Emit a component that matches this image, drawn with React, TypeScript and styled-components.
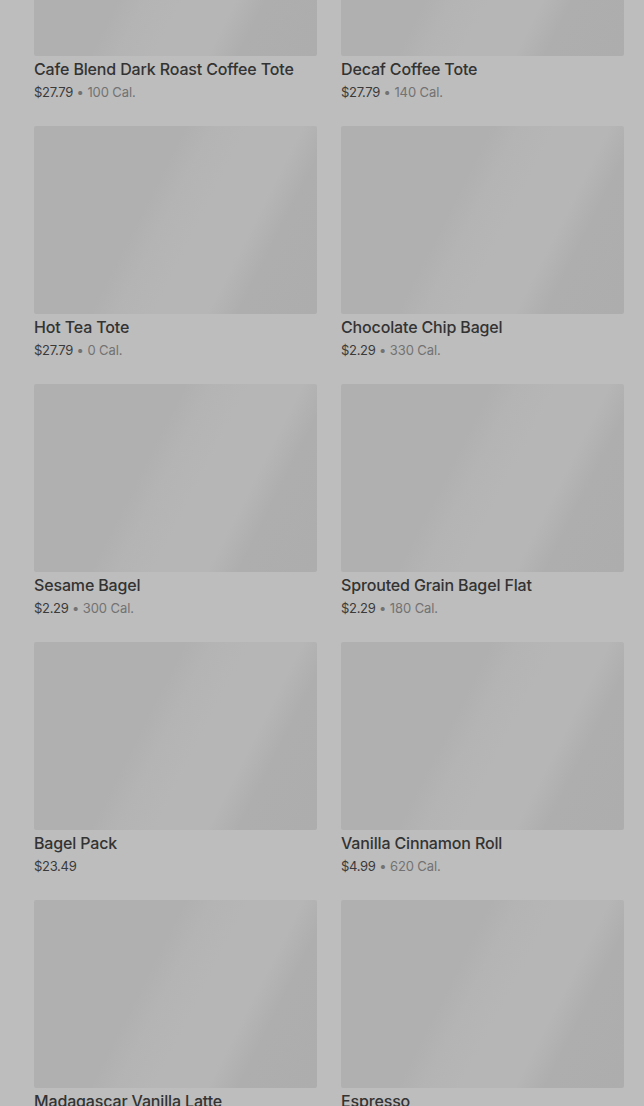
import React, { FC } from 'react';
import styled, { createGlobalStyle } from 'styled-components';

const GlobalStyle = createGlobalStyle`
  html, body {
    margin: 0;
    padding: 0;
    background: #bdbdbd;
    overflow: hidden;
  }
  body {
    font-family: Inter, "Noto Sans", sans-serif;
  }
`;

const Page = styled.div`
  height: 1106px;
  overflow: hidden;
  background: #bdbdbd;
`;

const Grid = styled.ul`
  list-style: none;
  margin: -132px 0 0;
  padding: 0 20px 0 34px;
  display: grid;
  grid-template-columns: 1fr 1fr;
  column-gap: 24px;
  row-gap: 24px;
`;

const Card = styled.li`
  display: flex;
  flex-direction: column;
  min-width: 0;
`;

const Thumb = styled.div`
  height: 188px;
  border-radius: 2px;
  background: linear-gradient(
    117deg,
    #b0b0b0 0%,
    #b0b0b0 40%,
    #b4b4b4 47%,
    #b6b6b6 57%,
    #b6b6b6 71%,
    #aeaeae 79%,
    #adadad 100%
  );
`;

const Title = styled.h3`
  margin: 2px 0 0;
  font-size: 16px;
  line-height: 22px;
  font-weight: 500;
  letter-spacing: -0.15px;
  color: #333333;
  white-space: nowrap;
`;

const Meta = styled.div`
  margin-top: 2px;
  font-size: 13px;
  line-height: 20px;
  color: #3a3a3a;
  letter-spacing: -0.3px;
`;

const Cal = styled.span`
  color: #727272;
  letter-spacing: -0.1px;
`;

type Item = { name: string; price: string; cal?: string };

const ITEMS: Item[] = [
  { name: 'Cafe Blend Dark Roast Coffee Tote', price: '$27.79', cal: '100 Cal.' },
  { name: 'Decaf Coffee Tote', price: '$27.79', cal: '140 Cal.' },
  { name: 'Hot Tea Tote', price: '$27.79', cal: '0 Cal.' },
  { name: 'Chocolate Chip Bagel', price: '$2.29', cal: '330 Cal.' },
  { name: 'Sesame Bagel', price: '$2.29', cal: '300 Cal.' },
  { name: 'Sprouted Grain Bagel Flat', price: '$2.29', cal: '180 Cal.' },
  { name: 'Bagel Pack', price: '$23.49' },
  { name: 'Vanilla Cinnamon Roll', price: '$4.99', cal: '620 Cal.' },
  { name: 'Madagascar Vanilla Latte', price: '$5.29', cal: '250 Cal.' },
  { name: 'Espresso', price: '$2.49', cal: '10 Cal.' },
];

const MenuCard: FC<{ item: Item }> = ({ item }) => (
  <Card>
    <Thumb />
    <Title>{item.name}</Title>
    <Meta>
      {item.price}
      {item.cal && <Cal> • {item.cal}</Cal>}
    </Meta>
  </Card>
);

export default function App() {
  return (
    <Page>
      <GlobalStyle />
      <Grid>
        {ITEMS.map((item) => (
          <MenuCard key={item.name} item={item} />
        ))}
      </Grid>
    </Page>
  );
}
